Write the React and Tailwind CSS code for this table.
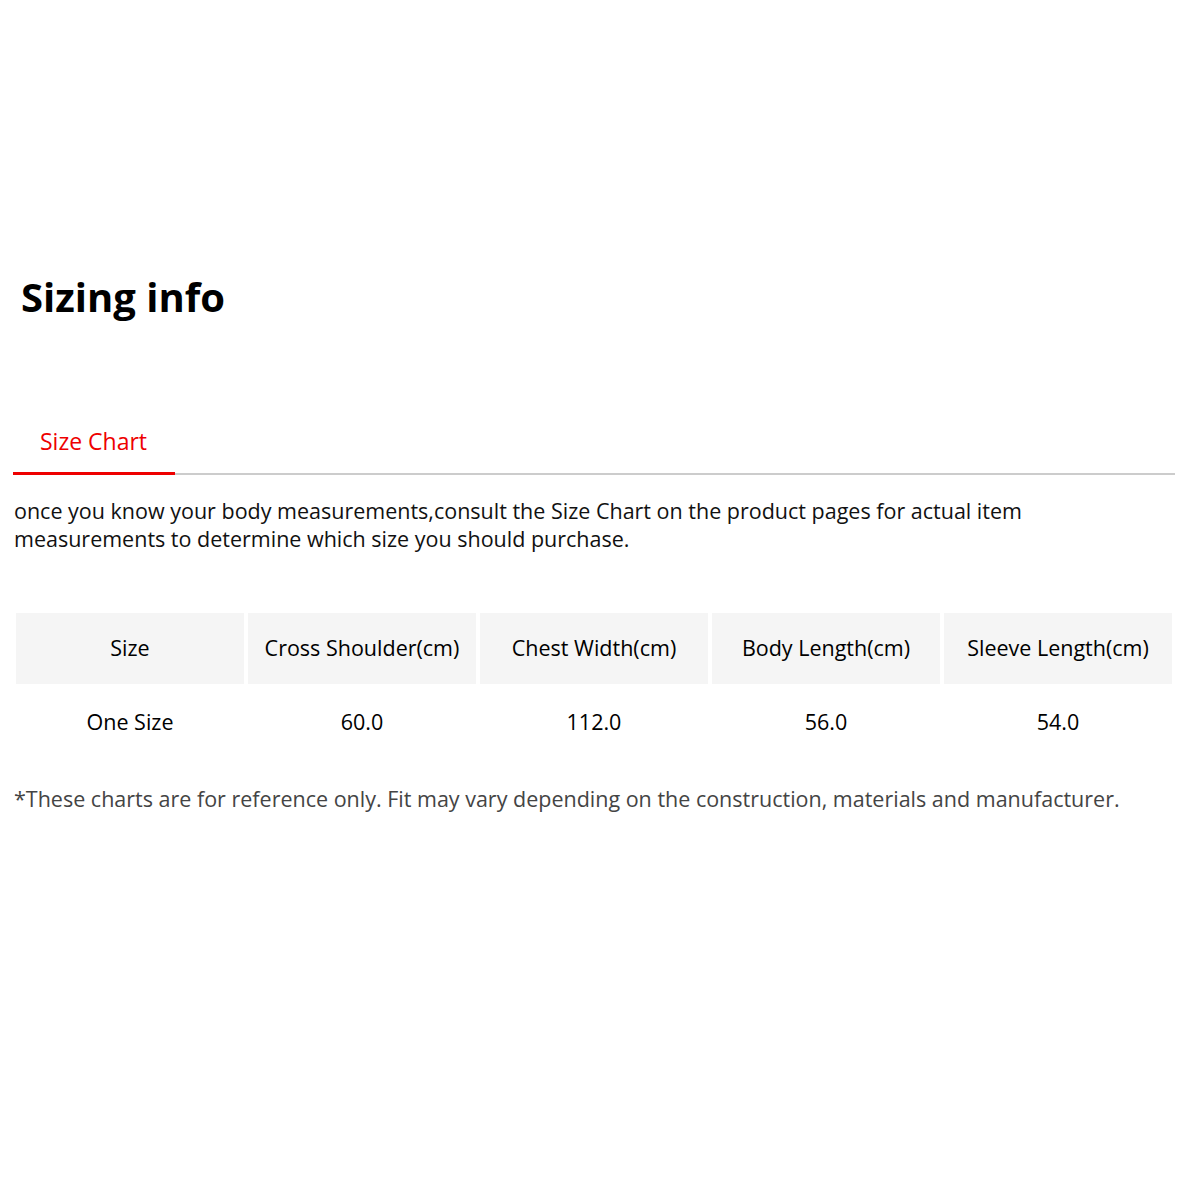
export default function App() {
  const headers = ['Size', 'Cross Shoulder(cm)', 'Chest Width(cm)', 'Body Length(cm)', 'Sleeve Length(cm)'];
  const row = ['One Size', '60.0', '112.0', '56.0', '54.0'];

  return (
    <div className="min-h-[1200px] bg-white pt-[270px] font-['Open_Sans',sans-serif] text-black">
      <h1 className="pl-[21px] text-[40px] font-bold leading-[54px]">Sizing info</h1>

      <div className="mt-[102px] ml-[13px] mr-[25px] flex items-end border-b-2 border-[#cccccc]">
        <div className="-mb-[2px] w-[162px] border-b-[3px] border-[#ee0000] pb-[16px] pl-[27px] text-[23px] leading-[30px] text-[#ee0000]">
          Size Chart
        </div>
      </div>

      <p className="mt-[22px] pl-[14px] pr-[120px] text-[21.5px] leading-[28px] text-[#111]">
        once you know your body measurements,consult the Size Chart on the product pages for actual item measurements to determine which size you should purchase.
      </p>

      <table className="mt-[56px] ml-[12px] w-[1164px] table-fixed border-separate border-spacing-[4px] text-[21.5px]">
        <thead>
          <tr>
            {headers.map((h) => (
              <th key={h} className="h-[71px] bg-[#f5f5f5] text-center font-normal">
                {h}
              </th>
            ))}
          </tr>
        </thead>
        <tbody>
          <tr>
            {row.map((c, i) => (
              <td key={i} className="h-[68px] text-center">
                {c}
              </td>
            ))}
          </tr>
        </tbody>
      </table>

      <p className="mt-[25px] pl-[14px] text-[21.5px] leading-[28px] text-[#444]">
        *These charts are for reference only. Fit may vary depending on the construction, materials and manufacturer.
      </p>
    </div>
  );
}
